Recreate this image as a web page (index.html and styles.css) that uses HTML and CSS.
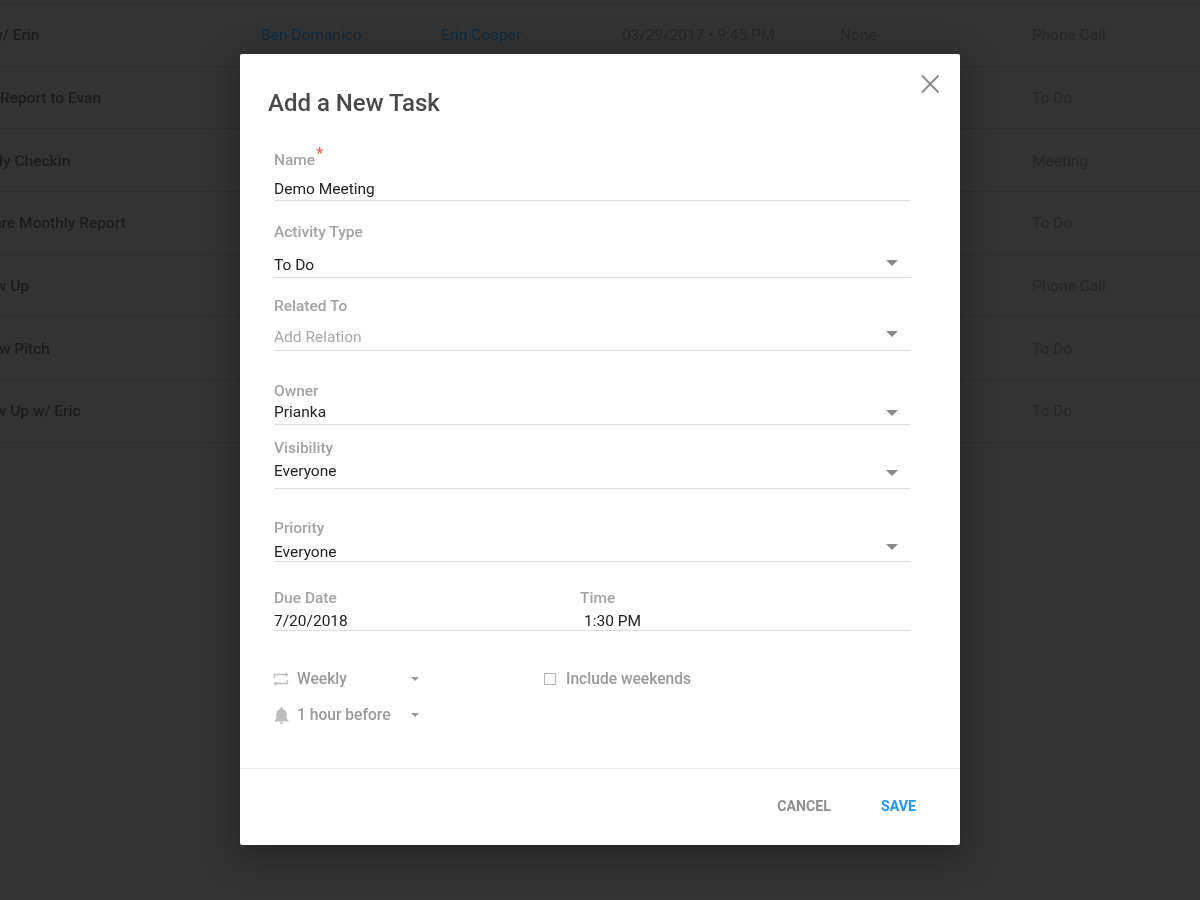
FILE: index.html
```html
<!DOCTYPE html>
<html lang="en">
<head>
<meta charset="utf-8">
<title>Add a New Task</title>
<link rel="stylesheet" href="styles.css">
</head>
<body>
<main class="table">
  <div class="row"><span class="name">Call w/ Erin</span><span class="link">Ben Domanico</span><span class="link">Erin Cooper</span><span class="cell">03/29/2017 • 9:45 PM</span><span class="cell">None</span><span class="cell type">Phone Call</span></div>
  <div class="row"><span class="name">Send Report to Evan</span><span class="cell type">To Do</span></div>
  <div class="row"><span class="name">Weekly Checkin</span><span class="cell type">Meeting</span></div>
  <div class="row"><span class="name">Prepare Monthly Report</span><span class="cell type">To Do</span></div>
  <div class="row"><span class="name">Follow Up</span><span class="cell type">Phone Call</span></div>
  <div class="row"><span class="name">Review Pitch</span><span class="cell type">To Do</span></div>
  <div class="row"><span class="name">Follow Up w/ Eric</span><span class="cell type">To Do</span></div>
</main>

<div class="overlay">
  <section class="modal">
    <header class="modal-head">
      <h1 class="title">Add a New Task</h1>
      <svg class="close" viewBox="0 0 18 18" aria-label="Close"><path d="M1 .5l16.5 17M17.5.5L1 17.5"/></svg>
    </header>

    <form class="form">
      <div class="field f-name">
        <div class="label">Name<sup class="req">*</sup></div>
        <div class="value">Demo Meeting</div>
      </div>
      <div class="field f-activity">
        <div class="label">Activity Type</div>
        <div class="value"><span>To Do</span><i class="tri tri-activity"></i></div>
      </div>
      <div class="field f-related">
        <div class="label">Related To</div>
        <div class="value placeholder"><span>Add Relation</span><i class="tri tri-related"></i></div>
      </div>
      <div class="field f-owner">
        <div class="label">Owner</div>
        <div class="value"><span>Prianka</span><i class="tri tri-owner"></i></div>
      </div>
      <div class="field f-visibility">
        <div class="label">Visibility</div>
        <div class="value"><span>Everyone</span><i class="tri tri-visibility"></i></div>
      </div>
      <div class="field f-priority">
        <div class="label">Priority</div>
        <div class="value"><span>Everyone</span><i class="tri tri-priority"></i></div>
      </div>
      <div class="field f-date">
        <div class="date-grid">
          <div class="label">Due Date</div>
          <div class="label">Time</div>
          <div class="value">7/20/2018</div>
          <div class="value time">1:30 PM</div>
        </div>
      </div>

      <div class="options">
        <div class="option">
          <svg class="opt-icon" viewBox="0 0 16 16"><path class="thin" d="M1.5 7V3.5H13M14.5 9v3.5H3"/><path class="solid" d="M12.5 1L15.5 3.5l-3 2.5zM3.5 10L.5 12.5l3 2.5z"/></svg>
          <span class="opt-text">Weekly</span>
          <i class="mini-tri"></i>
          <span class="check"></span>
          <span>Include weekends</span>
        </div>
        <div class="option">
          <svg class="opt-icon" viewBox="3.5 2.5 17 19.5"><path class="solid" d="M12 22c1.1 0 2-.9 2-2h-4c0 1.1.9 2 2 2zm6-6v-5c0-3.07-1.63-5.64-4.5-6.32V4c0-.83-.67-1.5-1.5-1.5s-1.5.67-1.5 1.5v.68C7.64 5.36 6 7.92 6 11v5l-2 2v1h16v-1l-2-2z"/></svg>
          <span class="opt-text">1 hour before</span>
          <i class="mini-tri"></i>
        </div>
      </div>
    </form>

    <footer class="modal-foot">
      <button class="btn" type="button">CANCEL</button>
      <button class="btn primary" type="button">SAVE</button>
    </footer>
  </section>
</div>
</body>
</html>
```
FILE: styles.css
```css
* { box-sizing: border-box; }
html, body { margin: 0; height: 100%; }
body {
  overflow: hidden;
  background: #333333;
  font-family: Roboto, "Liberation Sans", sans-serif;
  font-size: 15.5px;
  filter: blur(.35px);
}

/* dimmed table behind the dialog */
.table { margin: 3px 0 0 -39px; width: 1239px; border-top: 1px solid #2e2e2e; }
.row {
  display: grid;
  grid-template-columns: 300px 180px 181px 218px 192px 1fr;
  align-items: center;
  height: 62.67px;
  padding-top: 1px;
  border-bottom: 1px solid #2e2e2e;
  color: #272727;
}
.name { font-weight: 500; color: #1c1c1c; white-space: nowrap; }
.link { color: #0d2a40; }
.type { grid-column: 6; }

/* dialog */
.overlay {
  position: fixed;
  inset: 0;
  display: flex;
  align-items: center;
  justify-content: center;
}
.modal {
  width: 720px;
  height: 791px;
  margin-bottom: 1px;
  background: #fff;
  border-radius: 2px;
  box-shadow: 0 8px 36px rgba(0, 0, 0, .35);
  display: flex;
  flex-direction: column;
}
.modal-head {
  display: flex;
  justify-content: space-between;
  align-items: flex-start;
  padding: 21px 21px 0 28px;
}
.title {
  margin: 13px 0 0;
  font-size: 24px;
  line-height: 30px;
  font-weight: 500;
  color: #4a4a4a;
}
.close { width: 18px; height: 18px; }
.close path { fill: none; stroke: #8c8c8c; stroke-width: 2; }

.form { flex: 1; padding: 33px 49px 0 34px; }
.label { font-weight: 500; line-height: 18px; color: #a3a3a3; white-space: nowrap; }
.req { color: #f0564a; font-size: 16px; line-height: 0; margin-left: 1px; font-weight: 400; }
.value {
  display: flex;
  justify-content: space-between;
  align-items: center;
  line-height: 18px;
  color: #222;
}
.placeholder { color: #a8a8a8; }
.field { border-bottom: 1px solid #dcdcdc; }

.f-name .value { margin-top: 11px; padding-bottom: 2px; }
.f-activity { margin-top: 22px; }
.f-activity .value { margin-top: 15px; padding-bottom: 3px; }
.f-related { margin-top: 19px; }
.f-related .value { margin-top: 13px; padding-bottom: 4px; }
.f-owner { margin-top: 31px; }
.f-owner .value { margin-top: 3px; padding-bottom: 3px; }
.f-visibility { margin-top: 14px; }
.f-visibility .value { margin-top: 5px; padding-bottom: 8px; }
.f-priority { margin-top: 30px; }
.f-priority .value { margin-top: 6px; height: 18px; }
.f-date { margin-top: 27px; padding-bottom: 1px; }
.f-date .value { height: 17px; }

.date-grid { display: grid; grid-template-columns: 306px 1fr; row-gap: 5px; }
.time { padding-left: 4px; }

.tri {
  width: 0;
  height: 0;
  margin-right: 13px;
  border-left: 6px solid transparent;
  border-right: 6px solid transparent;
  border-top: 6px solid #8a8a8a;
}
.tri-activity { margin-bottom: 4px; }
.tri-related { margin-bottom: 6px; }
.tri-owner { margin-top: 2px; }
.tri-visibility { margin-top: 4px; }
.tri-priority { margin-bottom: 11px; }

.options { margin-top: 39px; color: #999; font-weight: 500; font-size: 15.6px; display: flex; flex-direction: column; gap: 18px; }
.option { display: flex; align-items: center; height: 18px; white-space: nowrap; }
.opt-icon { width: 16px; height: 16px; margin: 0 8px 0 -1px; flex: none; }
.option + .option .opt-icon { width: 15px; height: 17px; margin: 0 8px 0 0; }
.thin { fill: none; stroke: #bdbdbd; stroke-width: 1.3; }
.solid { fill: #bdbdbd; }
.opt-text { width: 114px; }
.mini-tri {
  width: 0;
  height: 0;
  border-left: 4.5px solid transparent;
  border-right: 4.5px solid transparent;
  border-top: 4.5px solid #999;
}
.check {
  width: 12px;
  height: 12px;
  margin: 0 10px 0 125px;
  border: 1.5px solid #b5b5b5;
}

.modal-foot {
  height: 77px;
  border-top: 1px solid #eeeeee;
  display: flex;
  justify-content: flex-end;
  align-items: center;
  gap: 50px;
  padding: 0 44px 2px 0;
}
.btn {
  border: 0;
  padding: 0;
  background: none;
  font-family: inherit;
  font-size: 14.2px;
  font-weight: 700;
  color: #8f8f8f;
}
.primary { color: #2196f3; }
```
